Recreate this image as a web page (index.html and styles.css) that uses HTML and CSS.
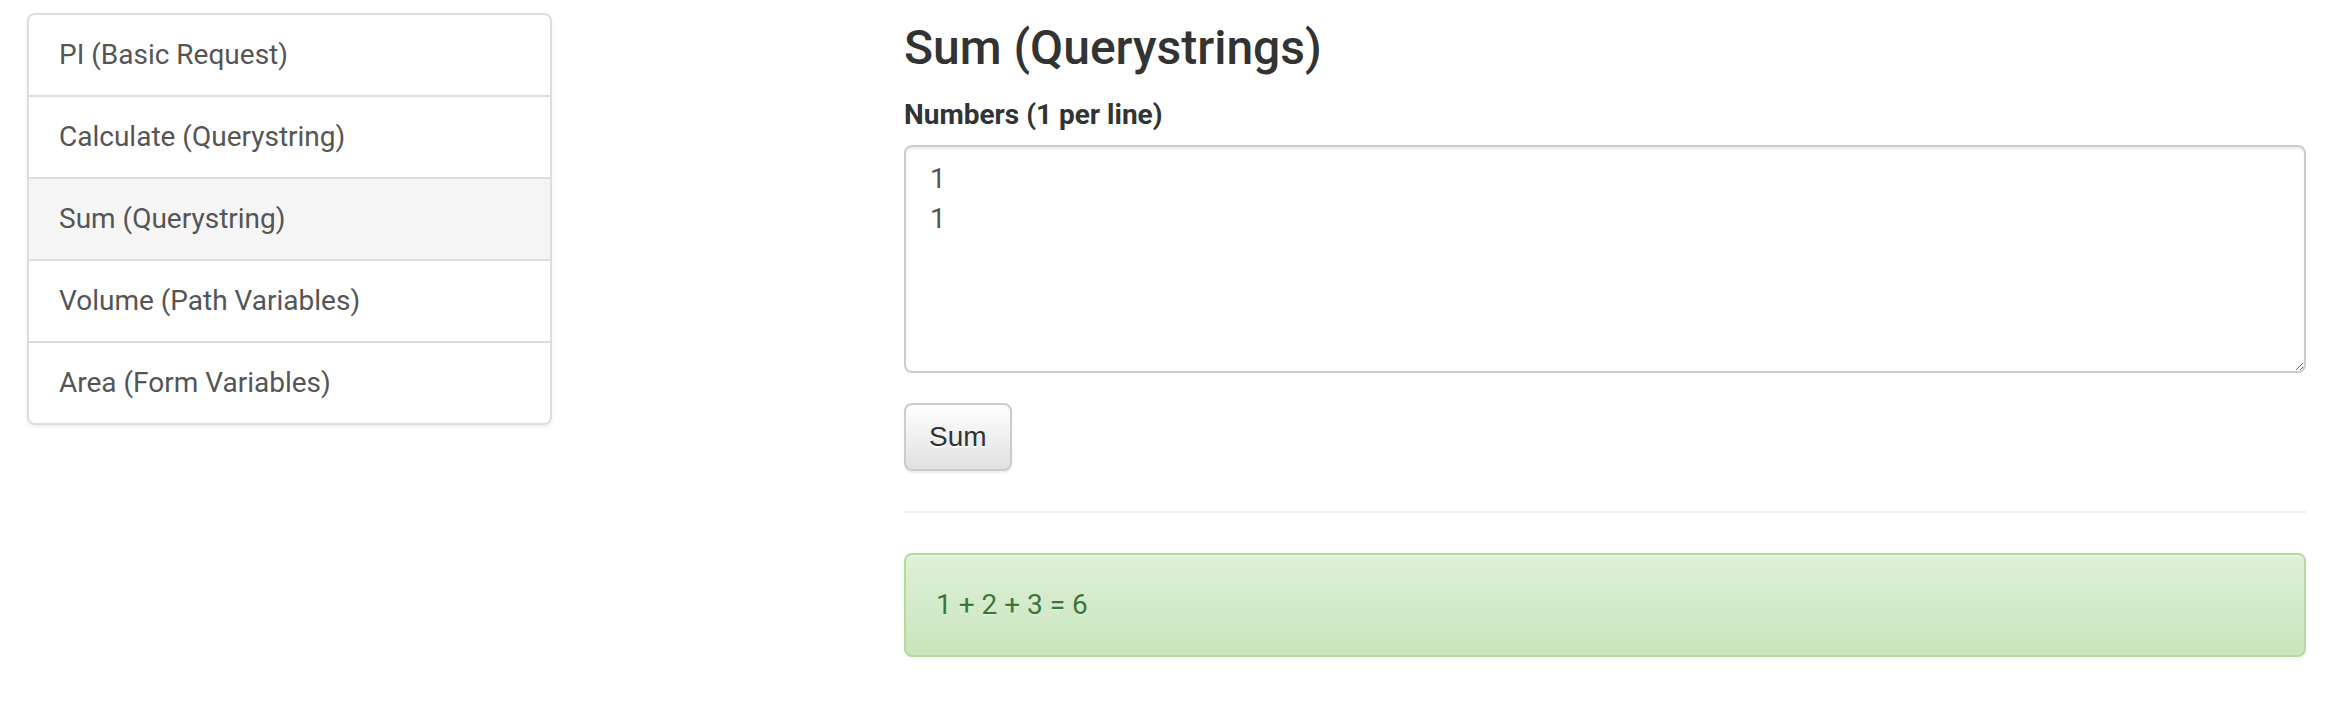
FILE: index.html
```html
<!DOCTYPE html>
<html lang="en">
<head>
<meta charset="utf-8">
<title>Sum (Querystrings)</title>
<link rel="stylesheet" href="styles.css">
</head>
<body>
<div class="page">
  <nav class="sidebar">
    <div class="list-group">
      <a class="list-group-item" href="#">PI (Basic Request)</a>
      <a class="list-group-item" href="#">Calculate (Querystring)</a>
      <a class="list-group-item is-active" href="#">Sum (Querystring)</a>
      <a class="list-group-item" href="#">Volume (Path Variables)</a>
      <a class="list-group-item" href="#">Area (Form Variables)</a>
    </div>
  </nav>
  <main class="main">
    <h3 class="title">Sum (Querystrings)</h3>
    <form class="form">
      <div class="form-group">
        <label class="label" for="numbers">Numbers (1 per line)</label>
        <textarea class="textarea" id="numbers" rows="5">1
1</textarea>
      </div>
      <button class="btn" type="button">Sum</button>
    </form>
    <hr class="divider">
    <div class="alert">1 + 2 + 3 = 6</div>
  </main>
</div>
</body>
</html>
```
FILE: styles.css
```css
* { box-sizing: border-box; }
html, body { margin: 0; padding: 0; background: #fff; }
body {
  font-family: Roboto, "Helvetica Neue", Arial, sans-serif;
  font-size: 28px;
  line-height: 40px;
  color: #333;
}
.page {
  display: flex;
  align-items: flex-start;
  padding: 0 34px 0 27px;
}
.sidebar {
  width: 525px;
  flex: 0 0 525px;
  margin-top: 13px;
}
.list-group {
  display: flex;
  flex-direction: column;
  border-radius: 8px;
  box-shadow: 0 2px 4px rgba(0,0,0,.075);
}
.list-group-item {
  display: block;
  padding: 20px 30px;
  margin-bottom: -2px;
  background: #fff;
  border: 2px solid #ddd;
  color: #555;
  text-decoration: none;
}
.list-group-item:first-child { border-top-left-radius: 8px; border-top-right-radius: 8px; }
.list-group-item:last-child { border-bottom-left-radius: 8px; border-bottom-right-radius: 8px; margin-bottom: 0; }
.list-group-item.is-active { background: #f5f5f5; }
.main {
  flex: 1;
  margin-left: 352px;
  min-width: 0;
}
.title {
  margin: 22px 0 20px;
  font-size: 48px;
  font-weight: 500;
  line-height: 1.1;
  color: #333;
}
.form { margin: 0; }
.form-group { margin-bottom: 30px; }
.label {
  display: block;
  margin-bottom: 10px;
  font-weight: 700;
}
.textarea {
  display: block;
  width: 100%;
  height: 228px;
  padding: 12px 24px;
  font-family: Roboto, "Helvetica Neue", Arial, sans-serif;
  font-size: 28px;
  line-height: 40px;
  color: #555;
  background: #fff;
  border: 2px solid #ccc;
  border-radius: 8px;
  box-shadow: inset 0 2px 2px rgba(0,0,0,.075);
  resize: vertical;
  outline: none;
}
.btn {
  display: inline-block;
  padding: 12px 23px;
  font-family: "Liberation Sans", Arial, sans-serif;
  font-size: 28px;
  line-height: 40px;
  color: #333;
  text-shadow: 0 2px 0 #fff;
  background: linear-gradient(to bottom, #fff 0, #e0e0e0 100%);
  border: 2px solid #ccc;
  border-radius: 8px;
  box-shadow: inset 0 2px 0 rgba(255,255,255,.15), 0 2px 2px rgba(0,0,0,.075);
  cursor: pointer;
}
.divider {
  margin: 40px 0;
  border: 0;
  border-top: 2px solid #eee;
  height: 0;
}
.alert {
  padding: 30px;
  margin-bottom: 40px;
  color: #3c763d;
  text-shadow: 0 2px 0 rgba(255,255,255,.2);
  background: linear-gradient(to bottom, #dff0d8 0, #c8e5bc 100%);
  border: 2px solid #b2dba1;
  border-radius: 8px;
  box-shadow: inset 0 2px 0 rgba(255,255,255,.25), 0 2px 4px rgba(0,0,0,.05);
}
```
